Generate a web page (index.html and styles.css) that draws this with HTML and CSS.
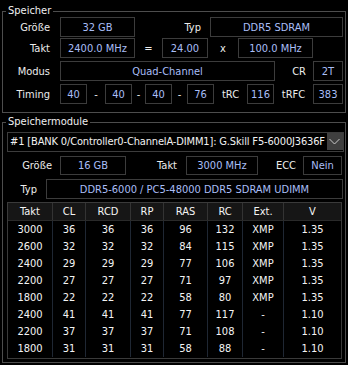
FILE: index.html
```html
<!DOCTYPE html>
<html lang="de">
<head>
<meta charset="utf-8">
<link rel="stylesheet" href="styles.css">
</head>
<body>
<div class="window">
  <div class="group g1">
    <div class="gtitle">Speicher</div>
    <div class="row r1">
      <span class="lbl w57 pr10">Größe</span>
      <span class="box w75">32 GB</span>
      <span class="lbl w75 pr9">Typ</span>
      <span class="box w133">DDR5 SDRAM</span>
    </div>
    <div class="row r2">
      <span class="lbl w57 pr10">Takt</span>
      <span class="box w75">2400.0 MHz</span>
      <span class="sym w27">=</span>
      <span class="box w46">24.00</span>
      <span class="sym w30">x</span>
      <span class="box w75">100.0 MHz</span>
    </div>
    <div class="row r3">
      <span class="lbl w57 pr10">Modus</span>
      <span class="box w215">Quad-Channel</span>
      <span class="lbl w38 pr7">CR</span>
      <span class="box w30">2T</span>
    </div>
    <div class="row r3">
      <span class="lbl w57 pr10">Timing</span>
      <span class="box w27">40</span>
      <span class="sym w18">-</span>
      <span class="box w27">40</span>
      <span class="sym w13">-</span>
      <span class="box w27">40</span>
      <span class="sym w15">-</span>
      <span class="box w27">76</span>
      <span class="sym w33">tRC</span>
      <span class="box w27">116</span>
      <span class="sym w39">tRFC</span>
      <span class="box w30">383</span>
    </div>
  </div>

  <div class="group g2">
    <div class="gtitle">Speichermodule</div>
    <div class="combo">
      <span class="combo-text">#1 [BANK 0/Controller0-ChannelA-DIMM1]: G.Skill F5-6000J3636F</span>
      <span class="combo-btn">
        <svg width="16" height="18" viewBox="0 0 16 18"><polyline points="2.5,6 7.5,11 12.5,6" fill="none" stroke="#c9c9c9" stroke-width="1"/></svg>
      </span>
    </div>
    <div class="row r-size">
      <span class="lbl w57 pr8">Größe</span>
      <span class="box w66">16 GB</span>
      <span class="lbl w60 pr9">Takt</span>
      <span class="box w72">3000 MHz</span>
      <span class="lbl w45 pr7">ECC</span>
      <span class="box w39">Nein</span>
    </div>
    <div class="row r-typ">
      <span class="lbl w43 pr9">Typ</span>
      <span class="box w297">DDR5-6000 / PC5-48000 DDR5 SDRAM UDIMM</span>
    </div>
    <div class="table">
      <div class="tr th">
        <span>Takt</span><span>CL</span><span>RCD</span><span>RP</span><span>RAS</span><span>RC</span><span>Ext.</span><span>V</span>
      </div>
      <div class="tr"><span>3000</span><span>36</span><span>36</span><span>36</span><span>96</span><span>132</span><span>XMP</span><span>1.35</span></div>
      <div class="tr"><span>2600</span><span>32</span><span>32</span><span>32</span><span>84</span><span>115</span><span>XMP</span><span>1.35</span></div>
      <div class="tr"><span>2400</span><span>29</span><span>29</span><span>29</span><span>77</span><span>106</span><span>XMP</span><span>1.35</span></div>
      <div class="tr"><span>2200</span><span>27</span><span>27</span><span>27</span><span>71</span><span>97</span><span>XMP</span><span>1.35</span></div>
      <div class="tr"><span>1800</span><span>22</span><span>22</span><span>22</span><span>58</span><span>80</span><span>XMP</span><span>1.35</span></div>
      <div class="tr"><span>2400</span><span>41</span><span>41</span><span>41</span><span>77</span><span>117</span><span>-</span><span>1.10</span></div>
      <div class="tr"><span>2200</span><span>37</span><span>37</span><span>37</span><span>71</span><span>108</span><span>-</span><span>1.10</span></div>
      <div class="tr"><span>1800</span><span>31</span><span>31</span><span>31</span><span>58</span><span>88</span><span>-</span><span>1.10</span></div>
    </div>
  </div>
</div>
</body>
</html>
```
FILE: styles.css
```css
* { box-sizing: border-box; }
html, body {
  margin: 0;
  padding: 0;
  background: #000;
}
body {
  width: 348px;
  height: 365px;
  overflow: hidden;
  font-family: "DejaVu Sans Condensed", "DejaVu Sans", sans-serif;
  font-stretch: condensed;
  font-size: 11px;
  color: #ececec;
}
.window {
  padding-top: 11px;
}
.group {
  margin-left: 2px;
  width: 344px;
  border: 1px solid #4d4d4d;
}
.gtitle {
  margin: -8px 0 0 3px;
  padding: 0 2px;
  width: fit-content;
  height: 14px;
  line-height: 14px;
  background: #000;
  color: #f0f0f0;
}
.row {
  display: flex;
  height: 20px;
  align-items: stretch;
}
.g1 .r1 { margin-top: -1px; }
.g1 .r2 { margin-top: 1px; }
.g1 .r3 { margin-top: 3px; }
.g1 { padding-bottom: 8px; }
.lbl {
  display: flex;
  align-items: center;
  justify-content: flex-end;
  white-space: nowrap;
}
.sym {
  display: flex;
  align-items: center;
  justify-content: center;
  white-space: nowrap;
}
.box {
  display: flex;
  align-items: center;
  justify-content: center;
  border: 1px solid #3c3c3c;
  color: #a9bef7;
  white-space: nowrap;
  overflow: hidden;
}
.pr7 { padding-right: 7px; }
.pr8 { padding-right: 8px; }
.pr9 { padding-right: 9px; }
.pr10 { padding-right: 10px; }
.w13 { width: 13px; }
.w15 { width: 15px; }
.w18 { width: 18px; }
.w27 { width: 27px; }
.w30 { width: 30px; }
.w33 { width: 33px; }
.w38 { width: 38px; }
.w39 { width: 39px; }
.w43 { width: 43px; }
.w45 { width: 45px; }
.w46 { width: 46px; }
.w57 { width: 57px; }
.w60 { width: 60px; }
.w66 { width: 66px; }
.w72 { width: 72px; }
.w75 { width: 75px; }
.w133 { width: 133px; }
.w215 { width: 215px; }
.w297 { width: 297px; }

.g2 {
  margin-top: 9px;
  padding-bottom: 3px;
}
.combo {
  display: flex;
  margin: 3px 0 0 4px;
  width: 337px;
  height: 20px;
  border: 1px solid #3c3c3c;
  overflow: hidden;
}
.combo-text {
  flex: 1;
  min-width: 0;
  padding-left: 2px;
  line-height: 18px;
  white-space: nowrap;
  letter-spacing: -0.15px;
  color: #f2f2f2;
}
.combo-btn {
  width: 16px;
  height: 17px;
  background: #3f3f3f;
  display: flex;
}
.r-size {
  margin-top: 4px;
  height: 19px;
}
.r-typ {
  margin-top: 4px;
}
.table {
  margin: 3px 0 0 4px;
  width: 335px;
  border: 1px solid #3a3a3a;
  padding-bottom: 1px;
}
.tr {
  display: grid;
  grid-template-columns: 45px 33px 45px 33px 44px 35px 41px 57px;
  height: 17px;
  line-height: 17px;
  color: #f4f4f4;
}
.tr span {
  text-align: center;
  border-right: 1px solid #1f2733;
  white-space: nowrap;
}
.tr span:last-child { border-right: none; }
.th {
  background: #161616;
  height: 18px;
  border-bottom: 1px solid #2a2a2a;
}
.th span {
  border-right-color: #333;
}
```
